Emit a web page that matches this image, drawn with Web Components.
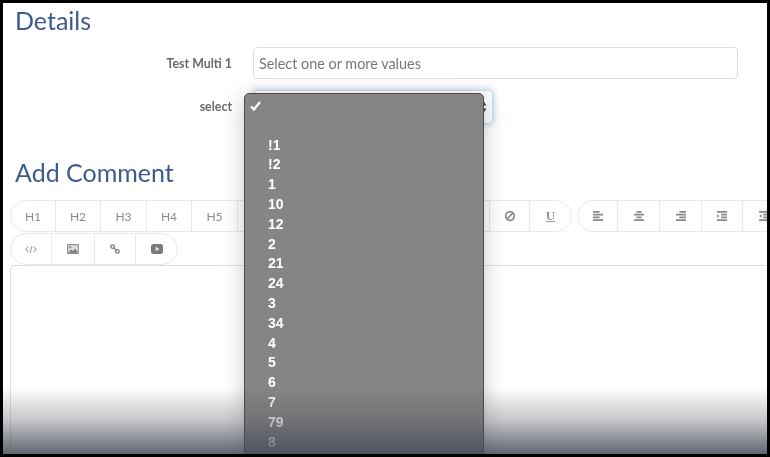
<!DOCTYPE html>
<html>
<head>
<meta charset="utf-8">
<style>
  html, body { margin: 0; height: 100%; background: #000; }
  body { overflow: hidden; font-family: Lato, "Liberation Sans", sans-serif; }
</style>
</head>
<body>
<screen-frame>
  <section-title>Details</section-title>
  <form-field label="Test Multi 1" style="--field-width: 485px; --field-height: 32px">
    <span class="placeholder">Select one or more values</span>
  </form-field>
  <form-field label="select" focused style="--field-width: 240px; --field-height: 34px; --row-gap: 11px"></form-field>
  <section-title style="--title-top: 31px">Add Comment</section-title>

  <tool-bar style="--bar-top: 10px">
    <tool-group>
      <tool-button w="45">H1</tool-button>
      <tool-button w="45">H2</tool-button>
      <tool-button w="46">H3</tool-button>
      <tool-button w="45">H4</tool-button>
      <tool-button w="46">H5</tool-button>
      <tool-button w="252"></tool-button>
      <tool-button w="40">
        <svg width="12" height="12" viewBox="0 0 14 14" fill="none" stroke="#8a8a8a" stroke-width="2"><circle cx="7" cy="7" r="5"/><path d="M3.500 10.500l7-7"/></svg>
      </tool-button>
      <tool-button w="41"><span style="font:bold 13px 'Liberation Serif',serif;text-decoration:underline;color:#999">U</span></tool-button>
    </tool-group>
    <tool-group style="margin-left: 5px">
      <tool-button w="40"><svg width="12" height="10" viewBox="0 0 14 12" fill="#8a8a8a"><path d="M1 0h8v2H1zM1 3.300h12v2H1zM1 6.600h8v2H1zM1 10h12v2H1z"/></svg></tool-button>
      <tool-button w="42"><svg width="12" height="10" viewBox="0 0 14 12" fill="#8a8a8a"><path d="M4 0h6v2H4zM1 3.300h12v2H1zM4 6.600h6v2H4zM1 10h12v2H1z"/></svg></tool-button>
      <tool-button w="42"><svg width="12" height="10" viewBox="0 0 14 12" fill="#8a8a8a"><path d="M5 0h8v2H5zM1 3.300h12v2H1zM5 6.600h8v2H5zM1 10h12v2H1z"/></svg></tool-button>
      <tool-button w="41"><svg width="12" height="10" viewBox="0 0 14 12" fill="#8a8a8a"><path d="M1 0h12v2H1zM6 3.300h7v2H6zM6 6.600h7v2H6zM1 10h12v2H1zM1 3.800l3 2.200-3 2.200z"/></svg></tool-button>
      <tool-button w="41"><svg width="12" height="10" viewBox="0 0 14 12" fill="#8a8a8a"><path d="M1 0h12v2H1zM6 3.300h7v2H6zM6 6.600h7v2H6zM1 10h12v2H1zM4 3.800l-3 2.200 3 2.200z"/></svg></tool-button>
    </tool-group>
  </tool-bar>

  <tool-bar style="--bar-top: 1px">
    <tool-group>
      <tool-button w="41"><svg width="12" height="9" viewBox="0 0 13 10" fill="none" stroke="#a0a0a0" stroke-width="1.200"><path d="M3.500 2L.8 5l2.700 3M9.500 2l2.700 3-2.700 3M7.600 1L5.400 9"/></svg></tool-button>
      <tool-button w="43"><svg width="12" height="10" viewBox="0 0 13 11"><rect width="13" height="11" rx="1" fill="#8a8a8a"/><rect x="1.200" y="1.200" width="10.600" height="8.600" fill="#dcdcdc"/><circle cx="3.500" cy="3.500" r="1.200" fill="#8a8a8a"/><path d="M1.200 9.500l3.300-3.500 2 2 2.300-3 3 4.500z" fill="#777"/></svg></tool-button>
      <tool-button w="41"><svg width="10" height="10" viewBox="0 0 10 10" fill="none" stroke="#7d7d7d" stroke-width="1.300"><circle cx="2.600" cy="2.600" r="1.800"/><circle cx="7.400" cy="7.400" r="1.800"/><path d="M3.900 3.900l2.200 2.200"/></svg></tool-button>
      <tool-button w="41"><svg width="12" height="10" viewBox="0 0 12 10"><rect width="12" height="10" rx="2.500" fill="#7b7b7b"/><path d="M4.700 2.700v4.600L8.500 5z" fill="#e8e8e8"/></svg></tool-button>
    </tool-group>
  </tool-bar>

  <editor-area></editor-area>

  <popup-menu>
    <menu-option checked></menu-option>
    <menu-option style="height: 18px"></menu-option>
    <menu-option>!1</menu-option>
    <menu-option>!2</menu-option>
    <menu-option>1</menu-option>
    <menu-option>10</menu-option>
    <menu-option>12</menu-option>
    <menu-option>2</menu-option>
    <menu-option>21</menu-option>
    <menu-option>24</menu-option>
    <menu-option>3</menu-option>
    <menu-option>34</menu-option>
    <menu-option>4</menu-option>
    <menu-option>5</menu-option>
    <menu-option>6</menu-option>
    <menu-option>7</menu-option>
    <menu-option>79</menu-option>
    <menu-option>8</menu-option>
  </popup-menu>

  <fade-overlay></fade-overlay>
</screen-frame>

<script>
  const define = (name, html, init) => {
    customElements.define(name, class extends HTMLElement {
      constructor () {
        super()
        this.attachShadow({ mode: 'open' }).innerHTML = html
      }

      connectedCallback () {
        if (init) init(this, this.shadowRoot)
      }
    })
  }

  define('screen-frame', `
    <style>
      :host {
        display: flex;
        flex-direction: column;
        position: absolute;
        left: 3px;
        top: 3px;
        width: 764px;
        height: 451px;
        background: #fff;
        overflow: hidden;
        filter: blur(0.45px);
      }
    </style>
    <slot></slot>
  `)

  define('section-title', `
    <style>
      :host {
        display: block;
        margin: var(--title-top, 0) 0 0 12px;
        font: 400 25px/35px Lato, sans-serif;
        color: #3d5b8c;
        flex: none;
      }
    </style>
    <slot></slot>
  `)

  define('form-field', `
    <style>
      :host {
        display: flex;
        align-items: center;
        gap: 21px;
        margin-top: var(--row-gap, 9px);
        flex: none;
      }
      label {
        width: 229px;
        text-align: right;
        font: 700 12.4px Lato, sans-serif;
        color: #6a6a6a;
      }
      :host([focused]) label { margin-bottom: 2px; }
      .box {
        box-sizing: border-box;
        width: var(--field-width);
        height: var(--field-height);
        border: 1px solid #dcdcdc;
        border-radius: 4px;
        padding: 0 5px;
        display: flex;
        align-items: center;
        font: 400 14.4px Lato, sans-serif;
        color: #777;
        background: #fff;
      }
      :host([focused]) .box {
        box-shadow: 0 0 7px rgba(120, 175, 230, 0.6);
        border-color: #cfdbe6;
        justify-content: flex-end;
      }
      svg { display: none; }
      :host([focused]) svg { display: block; }
    </style>
    <label></label>
    <div class="box">
      <slot></slot>
      <svg width="7" height="14" viewBox="0 0 7 14" fill="#444"><path d="M3.500 1L6.500 5.500H.5zM3.500 13L.5 8.500h6z"/></svg>
    </div>
  `, (el, root) => {
    root.querySelector('label').textContent = el.getAttribute('label')
  })

  define('tool-bar', `
    <style>
      :host {
        display: flex;
        flex: none;
        margin: var(--bar-top, 0) 0 0 7px;
      }
    </style>
    <slot></slot>
  `)

  define('tool-group', `
    <style>
      :host {
        display: flex;
        flex: none;
        box-sizing: border-box;
        height: 32px;
        border: 1px solid #e9e9e9;
        border-radius: 16px;
        background: #fff;
        overflow: hidden;
      }
    </style>
    <slot></slot>
  `)

  define('tool-button', `
    <style>
      :host {
        display: flex;
        flex: none;
        align-items: center;
        justify-content: center;
        box-sizing: border-box;
        border-right: 1px solid #e9e9e9;
        font: 400 12px Lato, sans-serif;
        color: #8c8c8c;
      }
      :host(:last-child) { border-right: 0; }
    </style>
    <slot></slot>
  `, (el) => {
    el.style.width = el.getAttribute('w') + 'px'
  })

  define('editor-area', `
    <style>
      :host {
        display: block;
        box-sizing: border-box;
        flex: none;
        width: 800px;
        height: 300px;
        margin: 0 0 0 7px;
        border: 1px solid #dedede;
        border-radius: 4px;
        background: #fff;
      }
    </style>
  `)

  define('popup-menu', `
    <style>
      :host {
        position: absolute;
        left: 241px;
        top: 90px;
        width: 240px;
        height: 380px;
        box-sizing: border-box;
        padding-top: 3px;
        background: #858585;
        border: 1px solid #4a4a4a;
        border-radius: 5px;
        box-shadow: 0 4px 22px rgba(0, 0, 0, 0.22);
      }
    </style>
    <slot></slot>
  `)

  define('menu-option', `
    <style>
      :host {
        display: flex;
        align-items: center;
        height: 19.8px;
        padding-left: 23px;
        position: relative;
        font: 700 14px "Liberation Sans", Arial, sans-serif;
        color: #fff;
      }
      svg { position: absolute; left: 5px; top: 4px; display: none; }
      :host([checked]) svg { display: block; }
    </style>
    <svg width="11" height="10" viewBox="0 0 11 10" fill="none" stroke="#fff" stroke-width="2.200"><path d="M1 5.500l3 3 6-7.500"/></svg>
    <slot></slot>
  `)

  define('fade-overlay', `
    <style>
      :host {
        position: absolute;
        left: 0;
        right: 0;
        bottom: 0;
        height: 66px;
        background: linear-gradient(to bottom, rgba(70, 75, 85, 0) 0%, rgba(70, 75, 85, 0.33) 50%, rgba(70, 75, 85, 0.85) 100%);
        pointer-events: none;
      }
    </style>
  `)
</script>
</body>
</html>
